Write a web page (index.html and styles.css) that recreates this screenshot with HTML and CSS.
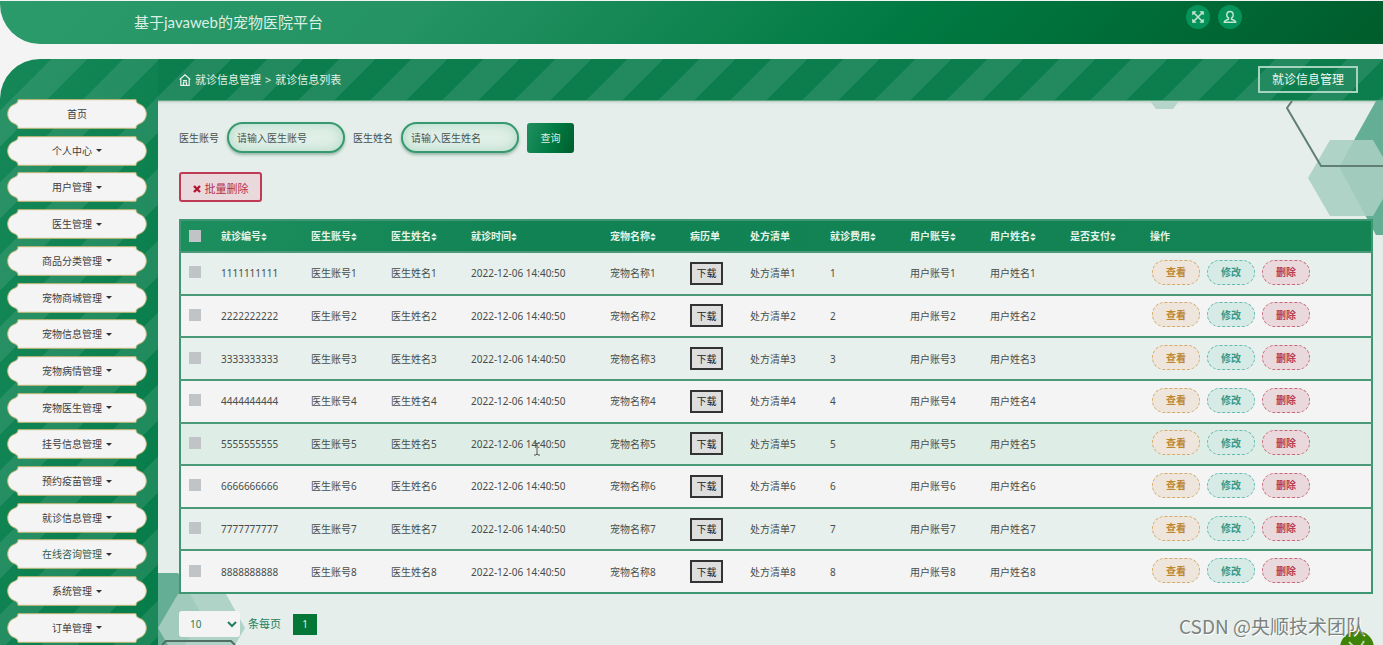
FILE: index.html
```html
<!DOCTYPE html>
<html lang="zh-CN">
<head>
<meta charset="utf-8">
<title>基于javaweb的宠物医院平台</title>
<link rel="stylesheet" href="styles.css">
</head>
<body>
<header class="topbar">
  <h1 class="brand">基于javaweb的宠物医院平台</h1>
  <div class="top-actions">
    <button class="round" type="button" aria-label="全屏"><svg viewBox="0 0 24 24" width="24" height="24"><path d="M8 8l8 8M16 8l-8 8" fill="none" stroke="#c4e4d3" stroke-width="1.600"/><path d="M6.500 6.500h3.500l-3.500 3.500zM17.500 6.500v3.500l-3.500-3.500zM17.500 17.500h-3.500l3.500-3.500zM6.500 17.500v-3.500l3.500 3.500z" fill="#c4e4d3" stroke="#c4e4d3" stroke-width=".6"/></svg></button>
    <button class="round" type="button" aria-label="用户"><svg viewBox="0 0 24 24" width="24" height="24"><path d="M12 6.500c-4 0-4 5.500-1.500 6.500v1.200c-2.500.6-4 1.300-4.200 3h11.400c-.2-1.700-1.700-2.400-4.200-3V13c2.500-1 2.500-6.500-1.500-6.500z" fill="none" stroke="#c4e4d3" stroke-width="1.400"/></svg></button>
  </div>
</header>
<div class="shell">
  <nav class="sidebar">
    <ul class="menu">
      <li><a href="#">首页</a></li>
      <li><a class="drop" href="#">个人中心</a></li>
      <li><a class="drop" href="#">用户管理</a></li>
      <li><a class="drop" href="#">医生管理</a></li>
      <li><a class="drop" href="#">商品分类管理</a></li>
      <li><a class="drop" href="#">宠物商城管理</a></li>
      <li><a class="drop" href="#">宠物信息管理</a></li>
      <li><a class="drop" href="#">宠物病情管理</a></li>
      <li><a class="drop" href="#">宠物医生管理</a></li>
      <li><a class="drop" href="#">挂号信息管理</a></li>
      <li><a class="drop" href="#">预约疫苗管理</a></li>
      <li><a class="drop" href="#">就诊信息管理</a></li>
      <li><a class="drop active" href="#">在线咨询管理</a></li>
      <li><a class="drop" href="#">系统管理</a></li>
      <li><a class="drop" href="#">订单管理</a></li>
    </ul>
  </nav>
  <main class="main">
    <div class="crumbbar">
      <div class="crumbs">
        <svg viewBox="0 0 12 12" width="12" height="12"><path d="M.7 5.500L6 .9l5.300 4.600M1.800 5v6.300h8.400V5M4.500 11V8h3v3M4 6.500h4" fill="none" stroke="#e3f2ea" stroke-width="1.200"/></svg>
        <a href="#">就诊信息管理</a><span>&gt;</span><span>就诊信息列表</span>
      </div>
      <h2 class="page-title">就诊信息管理</h2>
    </div>
    <div class="content">
      <svg class="deco deco-top" viewBox="0 0 240 140" width="240" height="140" aria-hidden="true">
        <path d="M7 0h29l-6 8H13z" fill="#b5d4ca"/>
        <path d="M233 0l-37 66 37 68h7V0z" fill="#65ae96"/>
        <path d="M187 39h43l22 38-22 38h-43l-22-38z" fill="#a9cfc3" fill-opacity=".88"/>
        <path d="M149 0l-5 7 34 58h62" fill="none" stroke="#627f74" stroke-width="2"/>
      </svg>
      <svg class="deco deco-bottom" viewBox="0 0 90 72" width="90" height="72" aria-hidden="true">
        <path d="M0 0h20l24 42-17 30H0z" fill="#65ae96"/>
        <path d="M20 21h48l19 34-10 17H10L0 55z" fill="#a9cfc3" fill-opacity=".88"/>
        <path d="M4 72l4-4h65l4 4" fill="none" stroke="#4f6f63" stroke-width="2"/>
      </svg>
      <form class="search" onsubmit="return false">
        <label for="acct">医生账号</label><input id="acct" type="text" placeholder="请输入医生账号">
        <label for="name">医生姓名</label><input id="name" type="text" placeholder="请输入医生姓名">
        <button class="query" type="submit">查询</button>
      </form>
      <button class="bulk" type="button"><svg viewBox="0 0 8 8" width="8" height="8"><path d="M1 1l6 6M7 1L1 7" stroke="#b5122f" stroke-width="2.400"/></svg>批量删除</button>
      <table class="grid">
        <colgroup><col class="w-check"><col class="w-no"><col class="w-std"><col class="w-std"><col class="w-time"><col class="w-std"><col class="w-file"><col class="w-std"><col class="w-std"><col class="w-std"><col class="w-std"><col class="w-std"><col></colgroup>
        <thead><tr><th><input type="checkbox" aria-label="全选"></th><th class="sort">就诊编号</th><th class="sort">医生账号</th><th class="sort">医生姓名</th><th class="sort">就诊时间</th><th class="sort">宠物名称</th><th>病历单</th><th>处方清单</th><th class="sort">就诊费用</th><th class="sort">用户账号</th><th class="sort">用户姓名</th><th class="sort">是否支付</th><th>操作</th></tr></thead>
        <tbody id="rows"></tbody>
      </table>
      <div class="pager">
        <select id="size" aria-label="条每页"><option>10</option></select>
        <label for="size">条每页</label>
        <button class="page" type="button">1</button>
      </div>
    </div>
  </main>
</div>
<svg class="ibeam" viewBox="0 0 8 14" width="8" height="14" aria-hidden="true"><path d="M1 1h2l1 1 1-1h2M4 2v10M1 13h2l1-1 1 1h2" fill="none" stroke="#555"/></svg>
<svg class="float-dot" viewBox="0 0 34 34" width="34" height="34" aria-hidden="true"><circle cx="17" cy="17" r="17" fill="#3f8308"/><path d="M9 11l5 5M24 10l-3 5" fill="none" stroke="#b9d79d" stroke-width="2"/></svg>
<p class="watermark">CSDN @央顺技术团队</p>
<script src="rows.js"></script>
</body>
</html>
```
FILE: styles.css
```css
* { box-sizing: border-box; }
body {
  margin: 0;
  height: 100vh;
  overflow: hidden;
  display: flex;
  flex-direction: column;
  gap: 15px;
  padding-top: 1px;
  background: #f4f4f4;
  color: #484d4b;
  font: 10px/16px "Noto Sans", "Noto Sans CJK SC", sans-serif;
}
button, input, select { font: inherit; margin: 0; }
a { color: inherit; text-decoration: none; }

.topbar {
  flex: none;
  height: 43px;
  padding: 0 141px 0 134px;
  display: flex;
  justify-content: space-between;
  border-radius: 0 0 0 40px;
  background: linear-gradient(135deg, #2b9b6b 0%, #259364 30%, #007a42 65%, #005c2c 100%);
}
.brand { margin: 0; color: #dcefe5; font: 400 15px/42px Lato, "Noto Sans CJK SC", sans-serif; }
.top-actions { display: flex; gap: 8px; padding-top: 4px; }
.round { width: 24px; height: 24px; padding: 0; border: 0; border-radius: 50%; background: #05935a; }
.round svg { display: block; }

.shell {
  flex: 1;
  min-height: 0;
  display: flex;
  border-top-left-radius: 40px;
  overflow: hidden;
}
.sidebar, .crumbbar {
  --light: rgba(255, 255, 255, .09);
  --stripes: linear-gradient(135deg, var(--light) 25%, transparent 25%, transparent 50%, var(--light) 50%, var(--light) 75%, transparent 75%);
}
.sidebar {
  flex: none;
  width: 158px;
  padding: 40px 11px 0 7px;
  background: var(--stripes) 51px 0 / 72px 72px, linear-gradient(105deg, #168858, #067c4a);
}
.menu {
  margin: 0;
  padding: 0;
  list-style: none;
  min-height: calc(100vh - 101px);
  display: flex;
  flex-direction: column;
  justify-content: space-between;
}
.menu a {
  display: flex;
  align-items: center;
  justify-content: center;
  gap: 4px;
  height: 30px;
  color: #3d3d3d;
  background: url("data:image/svg+xml,%3Csvg xmlns='http://www.w3.org/2000/svg' viewBox='0 0 140 30' preserveAspectRatio='none'%3E%3Cpath d='M11 .7H129C129 4 131 4.500 133 5.500C137 7 139.300 11 139.300 15S137 23 133 24.500C131 25.500 129 26 129 29.300H11C11 26 9 25.500 7 24.500C3 23 .7 19 .7 15S3 7 7 5.500C9 4.500 11 4 11 .7Z' fill='%23f4f4f4' stroke='%23c9b879'/%3E%3C/svg%3E") center / 100% 100% no-repeat;
}
.menu .drop::after { content: ""; border: 3px solid transparent; border-top-color: #333; border-bottom: 0; }
.menu .active { color: #2f5d49; }

.main { flex: 1; min-width: 0; display: flex; flex-direction: column; }
.crumbbar {
  flex: none;
  height: 42px;
  padding: 0 25px 0 21px;
  display: flex;
  align-items: center;
  justify-content: space-between;
  border-bottom: 1px solid #5aa685;
  background: var(--stripes) 37px 0 / 72px 72px, #0c7e4e;
}
.crumbs { display: flex; align-items: center; gap: 4px; color: #e3f2ea; font-size: 11px; }
.page-title {
  margin: 0;
  width: 100px;
  border: 2px solid #a5d3bd;
  color: #f0f8f4;
  font-size: 12px;
  font-weight: 400;
  line-height: 23px;
  text-align: center;
}

.content {
  flex: 1;
  position: relative;
  padding: 21px 10px 0 21px;
  background: #e5eeea;
  box-shadow: inset 0 3px 3px -2px #b4c3bc;
}
.content > * { position: relative; }
.content > .deco { position: absolute; }
.deco-top { top: 0; right: 0; }
.deco-bottom { left: 0; bottom: 0; }

.search { display: flex; align-items: center; height: 31px; gap: 8px; }
.search input {
  width: 118px;
  height: 31px;
  padding: 0 8px;
  border: 2px solid #37996f;
  border-radius: 16px;
  color: #48554f;
  background: #e0efe7;
  box-shadow: inset 0 0 12px #b0d8c4, 0 2px 3px #9ab8a9;
}
.search input::placeholder { color: #48554f; opacity: 1; }
.query {
  width: 47px;
  height: 30px;
  padding: 0;
  border: 0;
  border-radius: 3px;
  color: #dcefe5;
  background: linear-gradient(110deg, #218f60, #007a42 55%, #005c2c);
}
.bulk {
  display: flex;
  align-items: center;
  justify-content: center;
  gap: 4px;
  width: 83px;
  height: 30px;
  margin: 19px 0 17px;
  padding: 4px 0 0;
  border: 2px solid #bf3a54;
  border-radius: 3px;
  background: #ead9dc;
  color: #b5304a;
  font-size: 11px;
}

.grid {
  width: 100%;
  height: 375px;
  table-layout: fixed;
  border-collapse: collapse;
  border: 2px solid #3f9673;
}
.w-check { width: 31px; }
.w-no { width: 90px; }
.w-std { width: 80px; }
.w-time { width: 139px; }
.w-file { width: 60px; }
.grid th, .grid td { padding: 0 0 0 10px; text-align: left; white-space: nowrap; }
.grid th { height: 32px; color: #e2f3ea; font-weight: 700; }
.grid thead { background: linear-gradient(100deg, #1d8e5d, #118253 30%, #148455); }
.grid th:first-child, .grid td:first-child { padding-left: 8px; }
.grid td { height: 42px; border-top: 2px solid #4a9a7a; }
.grid tbody tr { background: #e7f0ec; }
.grid tbody tr:nth-child(even) { background: #f4f4f4; }
.grid tbody tr.hover { background: #deede5; }
.grid input {
  appearance: none;
  display: block;
  width: 12px;
  height: 12px;
  background: #c0c4c6;
}
.grid td:first-child, .grid td:last-child { padding-bottom: 2px; }
.sort::after {
  content: "";
  display: inline-block;
  width: 6px;
  height: 8px;
  vertical-align: -1px;
  background: currentColor;
  clip-path: polygon(50% 0, 100% 42%, 0 42%, 0 58%, 100% 58%, 50% 100%, 0 58%, 0 42%);
}
.download {
  width: 33px;
  height: 23px;
  padding: 0;
  border: 2px solid #333;
  background: #dededf;
  color: #222;
  display: block;
}
.ops { display: flex; gap: 7px; padding-left: 2px; }
.ops button {
  width: 48px;
  height: 25px;
  padding: 0;
  border: 1px dashed;
  border-radius: 13px;
  font-weight: 700;
}
.ops .view { color: #bd8835; background: #eee5dc; border-color: #d5aa68; }
.ops .edit { color: #35998b; background: #d6eae6; border-color: #66b9ad; }
.ops .del { color: #b63d54; background: #e9d9dc; border-color: #c9667a; }

.pager { display: flex; align-items: center; gap: 8px; margin-top: 17px; color: #24805a; font-size: 11px; }
.pager select {
  width: 61px;
  height: 26px;
  padding: 0 0 0 7px;
  border: 0;
  border-radius: 3px;
  background: #f4f4f4;
  color: #24805a;
  font-size: 10px;
}
.page { width: 24px; height: 21px; margin-left: 4px; padding: 0; border: 0; background: #047636; color: #dcefe5; font-size: 10px; }

.ibeam { position: absolute; left: 533px; top: 442px; }
.float-dot { position: absolute; right: 9px; bottom: -20px; }
.watermark {
  position: absolute;
  right: 18px;
  bottom: 5px;
  margin: 0;
  color: #7c8280;
  font: 19px/28px "Noto Sans CJK SC", sans-serif;
  text-shadow: 1px 1px 0 #fff;
}
```
FILE: rows.js
```js
document.getElementById("rows").innerHTML = [1, 2, 3, 4, 5, 6, 7, 8].map(n => `
<tr class="${n === 5 ? "hover" : ""}">
<td><input type="checkbox" aria-label="选择${n}"></td>
<td>${String(n).repeat(10)}</td><td>医生账号${n}</td><td>医生姓名${n}</td>
<td>2022-12-06 14:40:50</td><td>宠物名称${n}</td>
<td><button class="download" type="button">下载</button></td>
<td>处方清单${n}</td><td>${n}</td><td>用户账号${n}</td><td>用户姓名${n}</td><td></td>
<td><div class="ops"><button class="view" type="button">查看</button><button class="edit" type="button">修改</button><button class="del" type="button">删除</button></div></td>
</tr>`).join("");
```
